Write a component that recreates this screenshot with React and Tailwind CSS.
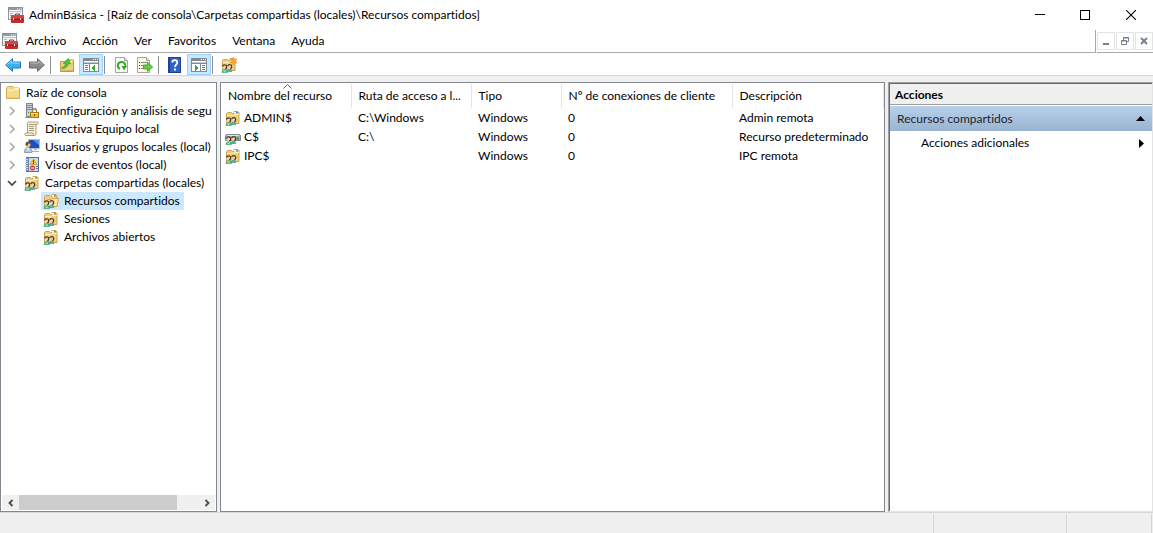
import React from "react";

function ConsoleIcon() {
  return (
    <svg width="16" height="16" viewBox="0 0 16 16" className="shrink-0" aria-hidden="true">
      <rect x="0.5" y="0.5" width="14" height="12" fill="#f4f6f8" stroke="#8a939c" />
      <rect x="1" y="1" width="13" height="2" fill="#8f9aa6" />
      <path d="M9 2h1M11 2h1M13 2h1" stroke="#fff" />
      <path d="M1 4.500h13" stroke="#b9c1c9" />
      <path d="M2 6.500h3M2 8.500h2M2 10.500h2" stroke="#aab3bc" />
      <path d="M7.500 9V7h4v2" fill="none" stroke="#7b3030" />
      <rect x="3" y="8" width="13" height="8" rx="1" fill="#bb2f2f" />
      <rect x="3" y="8" width="13" height="3" rx="1" fill="#cf4848" />
      <path d="M4 12.500h11" stroke="#9c2020" />
      <rect x="5" y="11" width="1" height="2" fill="#f0d8d8" />
      <rect x="12" y="11" width="1" height="2" fill="#f0d8d8" />
    </svg>
  );
}

function Users() {
  return (
    <g>
      <path d="M1 15.500c0-2 1-3 2.700-3s2.800 1 2.800 3z" fill="#59bd7c" stroke="#2f9c69" strokeWidth="0.600" />
      <path d="M6.300 14.500c0-1.700.7-2.500 2.200-2.500s2.300.8 2.300 2.500z" fill="#55b3ae" stroke="#2b8c91" strokeWidth="0.600" />
      <circle cx="3.500" cy="10.200" r="2" fill="#f3d3ae" />
      <path d="M1.500 9.500C2 7.300 5.700 7.400 5.700 9.800c0 1.200-.6 1.600-1.200 2.400" fill="none" stroke="#4a3822" strokeWidth="1.300" />
      <circle cx="8.500" cy="9.900" r="2" fill="#f3d3ae" />
      <path d="M6.700 9.200C7.200 7 10.700 7.100 10.700 9.500c0 1.200-.6 1.600-1.200 2.400" fill="none" stroke="#4a3822" strokeWidth="1.300" />
      <path d="M2.500 13.500l1.200 1.200 1.300-1.200" stroke="#e6f8ea" strokeWidth="0.800" fill="none" />
    </g>
  );
}

function ShareFolderIcon({ open = false, fresh = false }) {
  return (
    <svg width="16" height="16" viewBox="0 0 16 16" className="shrink-0" aria-hidden="true">
      <path d="M1.500 13.500v-10l1-1h4l1 1H9v-2h4l1 1v11z" fill="#f0d07a" stroke="#cda24a" />
      <path d="M9 2h4v1.500H9z" fill="#fff" />
      <path d="M11 2h2v1.500h-2z" fill="#3ba0e6" />
      {open ? (
        <path d="M4.500 6.500h4l1-1h6l-1.500 8h-11z" fill="#fae6a5" stroke="#d1a74a" />
      ) : (
        <path d="M2 5.500h6l1-1h5" stroke="#fff0bd" fill="none" />
      )}
      <Users />
      {fresh && (
        <path d="M12.500 0l1 2.400 2.500-.6-1.400 2.100L16 6l-2.500-.4-1 2.400-1-2.400L9 6l1.400-2.100L9 1.800l2.500.6z" fill="#f7a928" stroke="#df8215" strokeWidth="0.400" />
      )}
    </svg>
  );
}

function DriveShareIcon() {
  return (
    <svg width="16" height="16" viewBox="0 0 16 16" className="shrink-0" aria-hidden="true">
      <path d="M0.500 6.500l1-1h13l1 1v5h-15z" fill="#a9adb0" stroke="#85888b" />
      <path d="M2 6.500h12" stroke="#dfe1e3" />
      <rect x="12" y="8" width="2" height="3" fill="#35b34a" />
      <Users />
    </svg>
  );
}

function FolderIcon() {
  return (
    <svg width="16" height="16" viewBox="0 0 16 16" className="shrink-0" aria-hidden="true">
      <path d="M1.500 13.500v-11l1-1H8l1 1h4.500l1 1v10z" fill="#f5da8b" stroke="#d4ae55" />
      <path d="M2 5.500h6l1-1h5" stroke="#fff3c8" fill="none" />
      <path d="M9.500 3h4" stroke="#fff" />
      <path d="M2 12.500h12" stroke="#ecc973" />
    </svg>
  );
}

function ServerLockIcon() {
  return (
    <svg width="16" height="16" viewBox="0 0 16 16" className="shrink-0" aria-hidden="true">
      <path d="M2.500 0.500h6v13h-6z" fill="#cbd2d8" stroke="#77828c" />
      <path d="M3 2.500h5M3 4.500h5M3 6.500h5" stroke="#7d8993" />
      <path d="M1 14.500h6" stroke="#8b959e" />
      <rect x="4" y="9" width="1" height="1" fill="#32aa4a" />
      <path d="M8.500 9.500V8c0-3 4-3 4 0v1.500" fill="none" stroke="#8f8158" strokeWidth="1.300" />
      <rect x="6.500" y="9.500" width="8" height="5" fill="#edb936" stroke="#a97713" />
      <path d="M7 10.500h7" stroke="#ffe18b" />
      <rect x="10" y="11" width="1" height="2" fill="#74500b" />
    </svg>
  );
}

function ScrollIcon() {
  return (
    <svg width="16" height="16" viewBox="0 0 16 16" className="shrink-0" aria-hidden="true">
      <path d="M3.500 3c0-1.500.5-2 1.500-2h8.500c1 0 1 2.500-.5 2.500h-1V12c0 2-.5 2.500-1.500 2.500H2c-1.500 0-1.500-2.500 0-2.500h1.500z" fill="#f8f1d7" stroke="#aa9c77" />
      <path d="M5 3.500h7M3.500 12H9c0 1.500.5 2.500 1.500 2.500" stroke="#aa9c77" fill="none" />
      <path d="M5 5.500h5M5 7.500h5M5 9.500h5" stroke="#a59b80" />
    </svg>
  );
}

function LocalUsersIcon() {
  return (
    <svg width="16" height="16" viewBox="0 0 16 16" className="shrink-0" aria-hidden="true">
      <rect x="4.500" y="0.500" width="11" height="9" fill="#1c4fbb" stroke="#b9c2cc" />
      <path d="M9 1h6v5z" fill="#5b95e6" />
      <path d="M8 12.500h7M10 10.500h3" stroke="#a4afba" />
      <circle cx="4" cy="5.500" r="2.500" fill="#eebe8d" />
      <path d="M1.500 6C1 1.500 7 1.500 6.700 4.700L4.500 4.500 3 7z" fill="#6b4a2b" />
      <path d="M0.500 13.500c0-4 1.500-5 3.500-5s4 1 4 5z" fill="#b7cce3" stroke="#6684a4" strokeWidth="0.700" />
      <path d="M3.200 8.700l.8 3.300 1-3.300z" fill="#fff" />
    </svg>
  );
}

function EventIcon() {
  return (
    <svg width="16" height="16" viewBox="0 0 16 16" className="shrink-0" aria-hidden="true">
      <rect x="2.500" y="0.500" width="12" height="14" fill="#cfdcee" stroke="#5673a0" />
      <rect x="2" y="1" width="3" height="13" fill="#6f8ab0" />
      <path d="M1 2.500h3M1 4.500h3M1 6.500h3M1 8.500h3M1 10.500h3M1 12.500h3" stroke="#c9d2dd" />
      <path d="M9.500 1.800l3.700 5.700H5.800z" fill="#f8cd36" stroke="#c2961a" strokeWidth="0.600" />
      <path d="M9.500 3.500v2M9.500 6v1" stroke="#222" />
      <circle cx="8.500" cy="11" r="2.500" fill="#d43a33" />
      <path d="M7 11h3" stroke="#fff" />
      <path d="M12 9.500h2M12 11.500h2" stroke="#5577a6" />
    </svg>
  );
}

function ArrowIcon({ back = false }) {
  return back ? (
    <svg width="16" height="16" viewBox="0 0 16 16" aria-hidden="true">
      <path d="M0.700 8l6.800-6.300V5h8v6h-8v3.300z" fill="#3eb0ee" stroke="#1977be" strokeLinejoin="round" />
      <path d="M2.500 7.500L6.500 3.800V6h8" fill="none" stroke="#a5def9" />
    </svg>
  ) : (
    <svg width="16" height="16" viewBox="0 0 16 16" aria-hidden="true">
      <path d="M15.300 8L8.500 1.700V5h-8v6h8v3.300z" fill="#8c8c8c" stroke="#666" strokeLinejoin="round" />
      <path d="M1.500 6h8V4l4 3.500" fill="none" stroke="#bcbcbc" />
    </svg>
  );
}

function FolderUpIcon() {
  return (
    <svg width="16" height="16" viewBox="0 0 16 16" aria-hidden="true">
      <path d="M1.500 14.500v-10h5l1-1.500h7v11.500z" fill="#efd078" stroke="#c39b3d" />
      <path d="M9.500 4.500h4" stroke="#fff" />
      <path d="M2 13.500h12" stroke="#dcb553" />
      <path d="M3 10.500c2.200-.6 3.200-2 3.500-4H4.200L9.500 1.500l2 5.500-2-.4c-.6 3-3 5-6.500 5z" fill="#4bc33a" stroke="#2f9a28" strokeWidth="0.600" />
    </svg>
  );
}

function PaneIcon({ right = false }) {
  return (
    <svg width="16" height="16" viewBox="0 0 16 16" shapeRendering="crispEdges" aria-hidden="true">
      <rect x="0.500" y="1.500" width="15" height="13" fill="#fff" stroke="#818b96" />
      <rect x="0" y="1" width="16" height="3" fill="#818b96" />
      <path d="M10 2.500h1M12 2.500h1M14 2.500h1" stroke="#fff" />
      <path d="M1 5.500h14" stroke="#c6cbd1" />
      <path d="M0 6.500h16" stroke="#818b96" />
      {right ? (
        <>
          <path d="M9.500 7v8" stroke="#818b96" />
          <path d="M11 8.500h3M11 10.500h3M11 12.500h3" stroke="#4a86c7" />
          <path d="M4 8v6l3.500-3z" fill="#2fae32" />
        </>
      ) : (
        <>
          <path d="M6.500 7v8" stroke="#818b96" />
          <path d="M2 8.500h3M2 10.500h3M2 12.500h3" stroke="#4a86c7" />
          <path d="M12 8v6l-3.500-3z" fill="#2fae32" />
        </>
      )}
    </svg>
  );
}

function RefreshIcon() {
  return (
    <svg width="16" height="16" viewBox="0 0 16 16" aria-hidden="true">
      <path d="M2.500 0.500h9l3 3v12h-12z" fill="#fbfbfb" stroke="#a4a4a4" />
      <path d="M11.500 0.500v3h3" fill="#e2e2e2" stroke="#a4a4a4" />
      <path d="M7 12c-3.500-1.500-2.700-7 1.500-7 3.500 0 4.500 3 3.500 5.500" fill="none" stroke="#37a62b" strokeWidth="1.900" />
      <path d="M8.500 9H14l-3 4.500z" fill="#37a62b" />
    </svg>
  );
}

function ExportIcon() {
  return (
    <svg width="16" height="16" viewBox="0 0 16 16" aria-hidden="true">
      <path d="M0.500 0.500h9l3 3v12h-12z" fill="#fdf8e6" stroke="#aaa38f" />
      <path d="M9.500 0.500v3h3" fill="#e8dfc5" stroke="#aaa38f" />
      <path d="M2 5.500h1M2 8.500h1M2 11.500h1" stroke="#333" />
      <path d="M4 5.500h6M4 8.500h3M4 11.500h3" stroke="#858585" />
      <path d="M6.500 8h4V5.200L15.700 10l-5.200 4.500V12h-4z" fill="#67cb45" stroke="#369b27" strokeWidth="0.800" />
    </svg>
  );
}

function HelpIcon() {
  return (
    <svg width="16" height="16" viewBox="0 0 16 16" aria-hidden="true">
      <rect x="1.500" y="0.500" width="12" height="15" fill="#3361c4" stroke="#1c3f91" />
      <rect x="1" y="1" width="2" height="14" fill="#1f4396" />
      <path d="M5.300 5.500c0-3.200 5-3.200 5 0 0 2-2.300 2.200-2.300 4.500" fill="none" stroke="#fff" strokeWidth="1.800" />
      <rect x="7" y="11.500" width="2" height="2" fill="#fff" />
    </svg>
  );
}

function ToolButton({ label, on = false, children }) {
  return (
    <button
      type="button"
      aria-label={label}
      aria-pressed={on}
      className={
        on
          ? "flex h-[21px] w-6 items-center justify-center border border-[#99d1ff] bg-[#cce8ff]"
          : "flex h-[21px] w-6 items-center justify-center"
      }
    >
      {children}
    </button>
  );
}

function Separator() {
  return <div className="mx-px h-[18px] w-px bg-[#8c8c8c]" />;
}

const menus = ["Archivo", "Acción", "Ver", "Favoritos", "Ventana", "Ayuda"];

const nodes = [
  { label: "Configuración y análisis de segu", icon: <ServerLockIcon /> },
  { label: "Directiva Equipo local", icon: <ScrollIcon /> },
  { label: "Usuarios y grupos locales (local)", icon: <LocalUsersIcon /> },
  { label: "Visor de eventos (local)", icon: <EventIcon /> },
  { label: "Carpetas compartidas (locales)", icon: <ShareFolderIcon />, open: true },
];

const shares = [
  { name: "ADMIN$", path: "C:\\Windows", type: "Windows", count: "0", note: "Admin remota", icon: <ShareFolderIcon /> },
  { name: "C$", path: "C:\\", type: "Windows", count: "0", note: "Recurso predeterminado", icon: <DriveShareIcon /> },
  { name: "IPC$", path: "", type: "Windows", count: "0", note: "IPC remota", icon: <ShareFolderIcon /> },
];

const columns = ["Nombre del recurso", "Ruta de acceso a l...", "Tipo", "Nº de conexiones de cliente", "Descripción"];

function Chevron({ open }) {
  return (
    <svg width="10" height="10" viewBox="0 0 10 10" className="shrink-0" aria-hidden="true">
      {open ? (
        <path d="M1 3l4 4 4-4" fill="none" stroke="#404040" strokeWidth="1.600" />
      ) : (
        <path d="M3 1l4 4-4 4" fill="none" stroke="#a6a6a6" strokeWidth="1.500" />
      )}
    </svg>
  );
}

function Tree() {
  return (
    <nav aria-label="Árbol de consola" className="flex w-[217px] shrink-0 flex-col border border-[#828790] bg-white p-px">
      <ul className="flex-1 overflow-hidden whitespace-nowrap">
        <li>
          <button type="button" className="flex h-[18px] items-center gap-[5px] pl-[3px]">
            <FolderIcon />
            <span>Raíz de consola</span>
          </button>
        </li>
        {nodes.map((n) => (
          <li key={n.label}>
            <button type="button" aria-expanded={!!n.open} className="flex h-[18px] items-center pl-[5px]">
              <Chevron open={n.open} />
              <span className="ml-[7px] flex items-center gap-[5px]">
                {n.icon}
                <span>{n.label}</span>
              </span>
            </button>
          </li>
        ))}
        {["Recursos compartidos", "Sesiones", "Archivos abiertos"].map((label, i) => (
          <li key={label} className="pl-[39px]">
            <button
              type="button"
              className={
                i === 0
                  ? "flex h-[18px] items-center gap-[5px] bg-[#cce8ff] pl-0.5 pr-1"
                  : "flex h-[18px] items-center gap-[5px] pl-0.5 pr-1"
              }
            >
              <ShareFolderIcon open={i === 0} />
              <span>{label}</span>
            </button>
          </li>
        ))}
      </ul>
      <div className="flex h-[15px] bg-[#f0f0f0]">
        <button type="button" aria-label="Desplazar a la izquierda" className="flex w-[17px] items-center justify-center">
          <svg width="8" height="8" viewBox="0 0 8 8" aria-hidden="true">
            <path d="M5.500 1L2.500 4l3 3" fill="none" stroke="#505050" strokeWidth="1.900" />
          </svg>
        </button>
        <div className="flex-1">
          <div className="h-full w-[88%] bg-[#cdcdcd]" />
        </div>
        <button type="button" aria-label="Desplazar a la derecha" className="flex w-[17px] items-center justify-center">
          <svg width="8" height="8" viewBox="0 0 8 8" aria-hidden="true">
            <path d="M2.500 1l3 3-3 3" fill="none" stroke="#505050" strokeWidth="1.900" />
          </svg>
        </button>
      </div>
    </nav>
  );
}

function ShareList() {
  return (
    <main className="min-w-0 flex-1 overflow-hidden border border-[#828790] bg-white pt-px">
      <table className="w-[662px] table-fixed border-collapse whitespace-nowrap text-left">
        <colgroup>
          <col className="w-[130px]" />
          <col className="w-[120px]" />
          <col className="w-[90px]" />
          <col className="w-[171px]" />
          <col className="w-[151px]" />
        </colgroup>
        <thead>
          <tr className="h-6">
            {columns.map((c, i) => (
              <th key={c} scope="col" className="relative border-r border-[#e5e5e5] p-0 pl-[7px] font-normal">
                {c}
                {i === 0 && (
                  <svg width="9" height="5" viewBox="0 0 9 5" className="absolute left-[62px] top-0" aria-hidden="true">
                    <path d="M0.500 4.500l4-4 4 4" fill="none" stroke="#6b6b6b" />
                  </svg>
                )}
              </th>
            ))}
          </tr>
        </thead>
        <tbody>
          {shares.map((s) => (
            <tr key={s.name} className="h-[19px]">
              <td className="p-0 pl-1">
                <div className="flex items-center gap-[3px]">
                  {s.icon}
                  <span>{s.name}</span>
                </div>
              </td>
              <td className="p-0 pl-[7px]">{s.path}</td>
              <td className="p-0 pl-[7px]">{s.type}</td>
              <td className="p-0 pl-[7px]">{s.count}</td>
              <td className="p-0 pl-[7px]">{s.note}</td>
            </tr>
          ))}
        </tbody>
      </table>
    </main>
  );
}

function Actions() {
  return (
    <aside className="flex w-[265px] shrink-0 border border-b-[#e3e3e3] border-l-[#a0a0a0] border-r-[#e3e3e3] border-t-[#a0a0a0]">
      <div className="flex-1 border-l border-t border-[#696969] bg-white">
        <h2 className="h-[21px] border-b border-[#a0a0a0] bg-[#f0f0f0] pl-[5px] font-bold leading-[22px]">Acciones</h2>
        <button
          type="button"
          className="mt-px flex h-[25px] w-full items-center justify-between bg-linear-to-b from-[#b9d1ea] to-[#99b4d1] pl-[7px] pr-[7px] text-[#1e1e2c]"
        >
          <span>Recursos compartidos</span>
          <svg width="9" height="5" viewBox="0 0 9 5" aria-hidden="true">
            <path d="M4.500 0L9 5H0z" fill="#000" />
          </svg>
        </button>
        <button type="button" className="flex h-6 w-full items-center justify-between pl-[31px] pr-2">
          <span>Acciones adicionales</span>
          <svg width="5" height="9" viewBox="0 0 5 9" aria-hidden="true">
            <path d="M0 0l5 4.500L0 9z" fill="#000" />
          </svg>
        </button>
      </div>
    </aside>
  );
}

export default function App() {
  return (
    <div className="flex min-h-screen flex-col bg-[#f0f0f0] font-[Lato,'Open_Sans',sans-serif] text-[12px] leading-4 text-black [font-variant-ligatures:none]">
      <header className="bg-white">
        <div className="flex h-[30px] items-center pl-2">
          <ConsoleIcon />
          <h1 className="ml-[5px] flex-1 truncate">
            AdminBásica - [Raíz de consola\Carpetas compartidas (locales)\Recursos compartidos]
          </h1>
          <button type="button" aria-label="Minimizar" className="flex h-full w-11 items-center justify-center">
            <svg width="10" height="10" viewBox="0 0 10 10" aria-hidden="true"><path d="M0 4.500h10" stroke="#000" /></svg>
          </button>
          <button type="button" aria-label="Maximizar" className="flex h-full w-[46px] items-center justify-center">
            <svg width="10" height="10" viewBox="0 0 10 10" aria-hidden="true"><rect x="0.500" y="0.500" width="9" height="9" fill="none" stroke="#000" /></svg>
          </button>
          <button type="button" aria-label="Cerrar" className="flex h-full w-[45px] items-center justify-center">
            <svg width="10" height="10" viewBox="0 0 10 10" aria-hidden="true"><path d="M0 0l10 10M10 0L0 10" stroke="#000" strokeWidth="1.100" /></svg>
          </button>
        </div>
        <div className="flex h-[23px] gap-px">
          <div className="flex flex-1 items-center border-b border-r border-[#a9a9a9] pl-0.5">
            <ConsoleIcon />
            <nav className="ml-2 flex gap-4">
              {menus.map((m) => (
                <button key={m} type="button">{m}</button>
              ))}
            </nav>
          </div>
          <div className="flex items-center gap-px border-b border-[#a9a9a9]">
            <button type="button" aria-label="Minimizar ventana secundaria" className="flex size-[18px] items-center justify-center border border-[#e3e3e3]">
              <svg width="10" height="10" viewBox="0 0 10 10" aria-hidden="true"><path d="M2 8h6" stroke="#74808e" strokeWidth="2" /></svg>
            </button>
            <button type="button" aria-label="Restaurar ventana secundaria" className="flex size-[18px] items-center justify-center border border-[#e3e3e3]">
              <svg width="10" height="10" viewBox="0 0 10 10" aria-hidden="true">
                <path d="M3.500 4V1.500h5v4H7M3 2h6M1.500 4.500h5v4h-5zM1 5h6" fill="none" stroke="#74808e" />
              </svg>
            </button>
            <button type="button" aria-label="Cerrar ventana secundaria" className="flex size-[18px] items-center justify-center border border-[#e3e3e3]">
              <svg width="10" height="10" viewBox="0 0 10 10" aria-hidden="true"><path d="M2 2l6 6M8 2L2 8" stroke="#74808e" strokeWidth="2" /></svg>
            </button>
          </div>
        </div>
        <div role="toolbar" aria-label="Herramientas" className="flex h-[23px] items-center border-b border-[#d5d5d5] pl-px pt-px">
          <ToolButton label="Atrás"><ArrowIcon back /></ToolButton>
          <ToolButton label="Adelante"><ArrowIcon /></ToolButton>
          <Separator />
          <div className="w-[3px]" />
          <ToolButton label="Subir un nivel"><FolderUpIcon /></ToolButton>
          <ToolButton label="Mostrar u ocultar árbol de consola" on><PaneIcon /></ToolButton>
          <Separator />
          <div className="w-[3px]" />
          <ToolButton label="Actualizar"><RefreshIcon /></ToolButton>
          <ToolButton label="Exportar lista"><ExportIcon /></ToolButton>
          <Separator />
          <div className="w-[3px]" />
          <ToolButton label="Ayuda"><HelpIcon /></ToolButton>
          <ToolButton label="Mostrar u ocultar panel de acciones" on><PaneIcon right /></ToolButton>
          <Separator />
          <div className="w-[3px]" />
          <ToolButton label="Recurso compartido nuevo"><ShareFolderIcon fresh /></ToolButton>
        </div>
      </header>
      <div className="mt-1.5 flex flex-1 gap-[3px]">
        <Tree />
        <ShareList />
        <Actions />
      </div>
      <footer className="flex h-[21px] justify-end border-t border-[#d7d7d7] pt-px">
        <div className="w-[133px] border-l border-[#d7d7d7]" />
        <div className="mr-px w-[86px] border-l border-r border-[#d7d7d7]" />
      </footer>
    </div>
  );
}
